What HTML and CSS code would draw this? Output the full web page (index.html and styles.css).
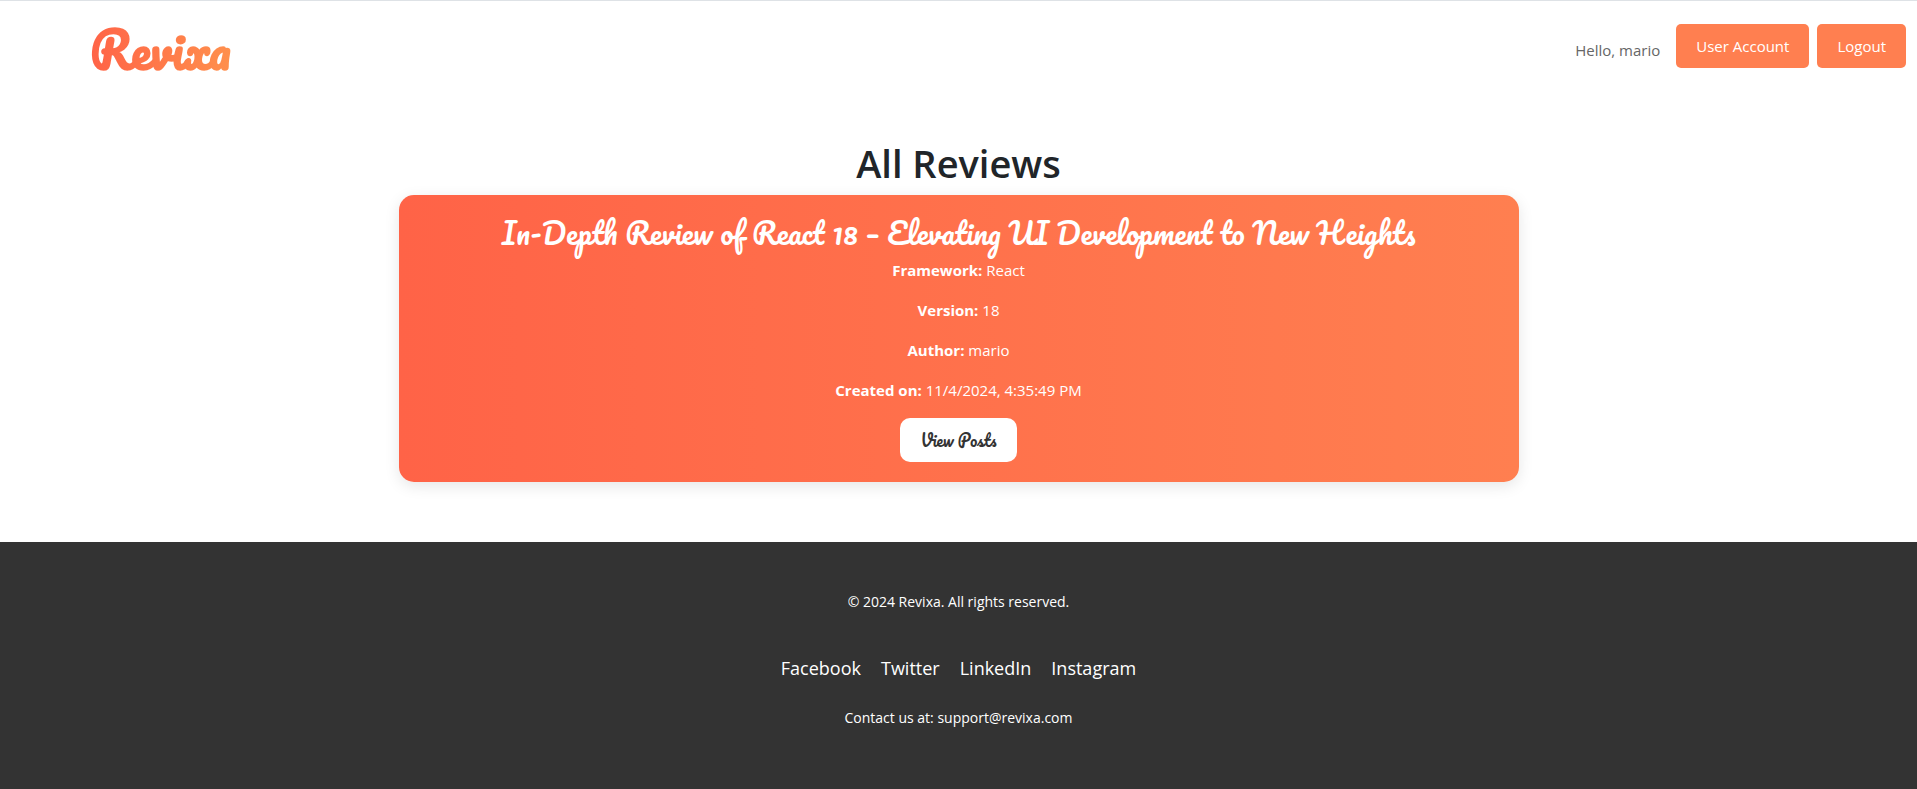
FILE: index.html
```html
<!DOCTYPE html>
<html lang="en">
<head>
  <meta charset="utf-8">
  <meta name="viewport" content="width=device-width, initial-scale=1">
  <title>Revixa</title>
  <link rel="stylesheet" href="styles.css">
</head>
<body>
  <header class="header">
    <a class="logo" href="#">Revixa</a>
    <nav class="account" aria-label="Account">
      <span class="greeting">Hello, mario</span>
      <button class="btn" type="button">User Account</button>
      <button class="btn" type="button">Logout</button>
    </nav>
  </header>

  <main class="main">
    <h1 class="page-title">All Reviews</h1>
    <article class="card">
      <h2 class="card-title">In-Depth Review of React 18 – Elevating UI Development to New Heights</h2>
      <p class="meta"><strong>Framework:</strong> React</p>
      <p class="meta"><strong>Version:</strong> 18</p>
      <p class="meta"><strong>Author:</strong> mario</p>
      <p class="meta"><strong>Created on:</strong> 11/4/2024, 4:35:49 PM</p>
      <button class="view-btn" type="button">View Posts</button>
    </article>
  </main>

  <footer class="footer">
    <p class="note">© 2024 Revixa. All rights reserved.</p>
    <nav class="social" aria-label="Social">
      <a href="#">Facebook</a>
      <a href="#">Twitter</a>
      <a href="#">LinkedIn</a>
      <a href="#">Instagram</a>
    </nav>
    <p class="note">Contact us at: support@revixa.com</p>
  </footer>
</body>
</html>
```

FILE: styles.css
```css
* {
  box-sizing: border-box;
}

body {
  margin: 0;
  min-height: 100vh;
  display: flex;
  flex-direction: column;
  border-top: 1px solid #dee2e6;
  background: #fff;
  color: #212529;
  font-family: "Segoe UI", "Open Sans", "Noto Sans", sans-serif;
  font-size: 15px;
  line-height: 24px;
}

h1, h2, p {
  margin: 0;
}

button {
  border: 0;
  font: inherit;
  cursor: pointer;
}

.header {
  display: flex;
  justify-content: space-between;
  align-items: center;
  min-height: 98px;
  padding: 0 11px 0 90px;
}

.logo {
  padding-right: 4px;
  background: linear-gradient(90deg, #ff6347, #ff914d);
  background-clip: text;
  -webkit-background-clip: text;
  color: transparent;
  font-family: Pacifico, cursive;
  font-size: 48px;
  font-weight: 700;
  line-height: 56px;
  text-decoration: none;
}

.account {
  display: flex;
  align-items: center;
  align-self: flex-start;
  gap: 8px;
  padding-top: 23px;
}

.greeting {
  padding: 8px 8px 0 0;
  color: #666;
}

.btn {
  padding: 10px 20px;
  border-radius: 5px;
  background: #ff7f50;
  color: #fff;
}

.main {
  width: 100%;
  max-width: 1160px;
  margin: 0 auto;
  padding: 40px 20px 60px;
  text-align: center;
}

.page-title {
  margin-bottom: 8px;
  font-size: 38px;
  font-weight: 600;
  line-height: 48px;
}

.card {
  display: flex;
  flex-direction: column;
  align-items: center;
  gap: 16px;
  padding: 20px;
  border-radius: 15px;
  background: linear-gradient(90deg, #ff6347, #ff7f50);
  box-shadow: 0 4px 15px rgba(0, 0, 0, 0.1);
  color: #fff;
}

.card-title {
  margin-bottom: -8px;
  font-family: Pacifico, cursive;
  font-size: 29px;
  font-weight: 500;
  line-height: 35px;
}

.view-btn {
  padding: 10px 20px;
  border-radius: 10px;
  background: #fff;
  color: #333;
  font-family: Pacifico, cursive;
  font-size: 16px;
}

.footer {
  flex: 1;
  display: flex;
  flex-direction: column;
  align-items: center;
  padding: 48px 20px 40px;
  background: #333;
  color: #fff;
}

.note {
  font-size: 14px;
}

.social {
  display: flex;
  flex-wrap: wrap;
  justify-content: center;
  gap: 20px;
  margin: 40px 0 24px;
  font-size: 18px;
  line-height: 28px;
}

.social a {
  color: inherit;
  text-decoration: none;
}
```
